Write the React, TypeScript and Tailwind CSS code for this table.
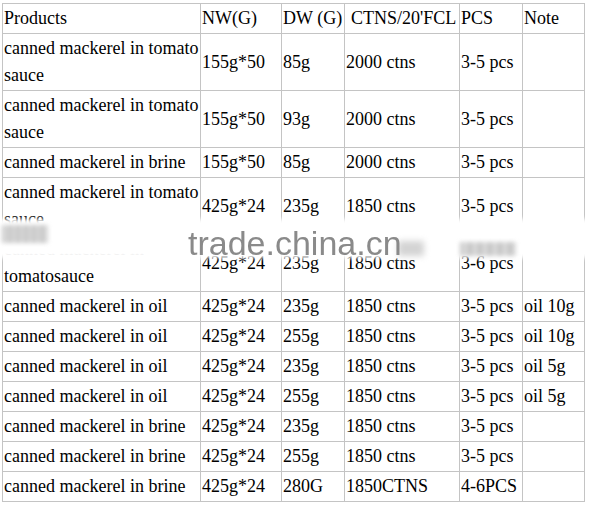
import React from "react";

type Row = { p: string; nw: string; dw: string; ct: string; pcs: string; note: string };

const rows: Row[] = [
  { p: "canned mackerel in tomato sauce", nw: "155g*50", dw: "85g", ct: "2000 ctns", pcs: "3-5 pcs", note: "" },
  { p: "canned mackerel in tomato sauce", nw: "155g*50", dw: "93g", ct: "2000 ctns", pcs: "3-5 pcs", note: "" },
  { p: "canned mackerel in brine", nw: "155g*50", dw: "85g", ct: "2000 ctns", pcs: "3-5 pcs", note: "" },
  { p: "canned mackerel in tomato sauce", nw: "425g*24", dw: "235g", ct: "1850 ctns", pcs: "3-5 pcs", note: "" },
  { p: "canned mackerel in tomatosauce", nw: "425g*24", dw: "235g", ct: "1850 ctns", pcs: "3-6 pcs", note: "" },
  { p: "canned mackerel in oil", nw: "425g*24", dw: "235g", ct: "1850 ctns", pcs: "3-5 pcs", note: "oil 10g" },
  { p: "canned mackerel in oil", nw: "425g*24", dw: "255g", ct: "1850 ctns", pcs: "3-5 pcs", note: "oil 10g" },
  { p: "canned mackerel in oil", nw: "425g*24", dw: "235g", ct: "1850 ctns", pcs: "3-5 pcs", note: "oil 5g" },
  { p: "canned mackerel in oil", nw: "425g*24", dw: "255g", ct: "1850 ctns", pcs: "3-5 pcs", note: "oil 5g" },
  { p: "canned mackerel in brine", nw: "425g*24", dw: "235g", ct: "1850 ctns", pcs: "3-5 pcs", note: "" },
  { p: "canned mackerel in brine", nw: "425g*24", dw: "255g", ct: "1850 ctns", pcs: "3-5 pcs", note: "" },
  { p: "canned mackerel in brine", nw: "425g*24", dw: "280G", ct: "1850CTNS", pcs: "4-6PCS", note: "" },
];

const td = "border border-[#c4c4c4] px-[1px] py-[1px] align-middle text-left font-normal";

export default function App() {
  return (
    <div
      className="relative w-[590px] h-[507px] bg-white overflow-hidden pl-[2px] pt-[3px] text-[18px] leading-[27px] text-black"
      style={{ fontFamily: '"Liberation Serif", "Times New Roman", serif' }}
    >
      <table className="border-collapse table-fixed w-[582px]">
        <colgroup>
          <col className="w-[198px]" />
          <col className="w-[81px]" />
          <col className="w-[63px]" />
          <col className="w-[115px]" />
          <col className="w-[63px]" />
          <col className="w-[62px]" />
        </colgroup>
        <thead>
          <tr>
            <th className={td}>Products</th>
            <th className={td}>NW(G)</th>
            <th className={td}>DW (G)</th>
            <th className={`${td} pl-[6px] whitespace-nowrap`}>CTNS/20'FCL</th>
            <th className={td}>PCS</th>
            <th className={td}>Note</th>
          </tr>
        </thead>
        <tbody>
          {rows.map((r, i) => (
            <tr key={i}>
              <td className={td}>{r.p}</td>
              <td className={td}>{r.nw}</td>
              <td className={td}>{r.dw}</td>
              <td className={td}>{r.ct}</td>
              <td className={td}>{r.pcs}</td>
              <td className={td}>{r.note}</td>
            </tr>
          ))}
        </tbody>
      </table>

      {/* watermark band */}
      <div className="absolute left-[-10px] right-[-10px] top-[219px] h-[39px] bg-white blur-[2px]" />
      <div className="absolute left-[2px] top-[225px] w-[46px] h-[18px] bg-[repeating-linear-gradient(90deg,#9a9a9a_0px,#c8c8c8_4px,#9a9a9a_8px)] opacity-60 blur-[2px]" />
      <div className="absolute left-[398px] top-[241px] w-[26px] h-[15px] bg-[#a8a8a8] opacity-50 blur-[3px]" />
      <div className="absolute left-[460px] top-[242px] w-[56px] h-[14px] bg-[repeating-linear-gradient(90deg,#9a9a9a_0px,#c8c8c8_5px,#9a9a9a_10px)] opacity-60 blur-[2px]" />
      <div
        className="absolute left-[188px] top-[226px] text-[34px] leading-[34px] text-[#8a8a8a] blur-[0.4px] whitespace-nowrap"
        style={{ fontFamily: '"Liberation Sans", Arial, sans-serif' }}
      >
        trade.china.cn
      </div>
    </div>
  );
}
